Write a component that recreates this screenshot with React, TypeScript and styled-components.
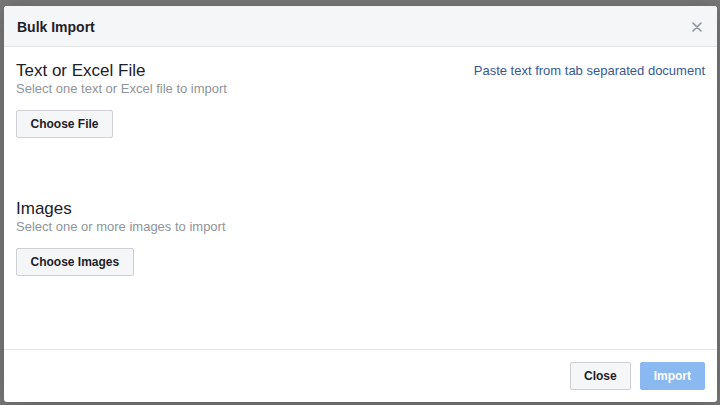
import styled, { createGlobalStyle } from "styled-components";

const GlobalStyle = createGlobalStyle`
    html, body {
        margin: 0;
        padding: 0;
        background: #7a7a7a;
    }
    * {
        box-sizing: border-box;
    }
`;

const Backdrop = styled.div`
    width: 720px;
    height: 405px;
    padding: 6px 3px 3px 4px;
    display: flex;
    background: #7a7a7a;
    font-family: "Liberation Sans", Arial, sans-serif;
`;

const Modal = styled.div`
    flex: 1;
    display: flex;
    flex-direction: column;
    background: #fff;
    border-radius: 3px;
    overflow: hidden;
    box-shadow: 0 2px 26px rgba(0, 0, 0, 0.25);
`;

const Header = styled.div`
    height: 41px;
    display: flex;
    align-items: center;
    justify-content: space-between;
    padding: 1px 12px 0 13px;
    background: #f5f6f7;
    border-bottom: 1px solid #e5e5e5;
`;

const HeaderTitle = styled.h1`
    margin: 0;
    font-size: 14px;
    font-weight: bold;
    color: #1d2129;
`;

const CloseX = styled.button`
    width: 16px;
    height: 16px;
    padding: 0;
    border: none;
    background: transparent;
    display: flex;
    align-items: center;
    justify-content: center;
    cursor: pointer;
`;

const Body = styled.div`
    flex: 1;
    padding: 14px 12px 12px 12px;
    display: flex;
    flex-direction: column;
    gap: 61px;
`;

const Section = styled.section`
    display: flex;
    flex-direction: column;
    align-items: flex-start;
`;

const SectionTop = styled.div`
    align-self: stretch;
    display: flex;
    justify-content: space-between;
    align-items: flex-start;
`;

const SectionTitle = styled.h2`
    margin: 0;
    font-size: 17px;
    line-height: 20px;
    font-weight: normal;
    color: #1d2129;
`;

const SectionHint = styled.div`
    font-size: 13px;
    line-height: 16px;
    color: #90949c;
`;

const TextLink = styled.a`
    margin-top: 2px;
    font-size: 13px;
    line-height: 16px;
    color: #365899;
    text-decoration: none;
    cursor: pointer;
`;

type ButtonProps = {
    $primary?: boolean;
    $pad?: number;
};

const Button = styled.button<ButtonProps>`
    height: 28px;
    padding: 0 ${p => p.$pad ?? 13}px;
    border-radius: 2px;
    font-family: inherit;
    font-size: 12px;
    font-weight: bold;
    cursor: pointer;
    border: 1px solid ${p => (p.$primary ? "#8ab9f2" : "#ced0d4")};
    background: ${p => (p.$primary ? "#8ab9f2" : "#f5f6f7")};
    color: ${p => (p.$primary ? "#ffffff" : "#1d2129")};
`;

const PickButton = styled(Button)`
    margin-top: 13px;
`;

const Footer = styled.div`
    display: flex;
    justify-content: flex-end;
    gap: 9px;
    padding: 12px;
    border-top: 1px solid #e5e5e5;
`;

const CrossIcon = () => (
    <svg width="10" height="10" viewBox="0 0 10 10">
        <path d="M1 1L9 9M9 1L1 9" stroke="#8d949e" strokeWidth="1.6" strokeLinecap="round" />
    </svg>
);

export default function App() {
    return (
        <>
            <GlobalStyle />
            <Backdrop>
                <Modal>
                    <Header>
                        <HeaderTitle>Bulk Import</HeaderTitle>
                        <CloseX aria-label="Close">
                            <CrossIcon />
                        </CloseX>
                    </Header>
                    <Body>
                        <Section>
                            <SectionTop>
                                <div>
                                    <SectionTitle>Text or Excel File</SectionTitle>
                                    <SectionHint>Select one text or Excel file to import</SectionHint>
                                </div>
                                <TextLink>Paste text from tab separated document</TextLink>
                            </SectionTop>
                            <PickButton $pad={13.5}>Choose File</PickButton>
                        </Section>
                        <Section>
                            <SectionTitle>Images</SectionTitle>
                            <SectionHint>Select one or more images to import</SectionHint>
                            <PickButton $pad={13.5}>Choose Images</PickButton>
                        </Section>
                    </Body>
                    <Footer>
                        <Button>Close</Button>
                        <Button $primary>Import</Button>
                    </Footer>
                </Modal>
            </Backdrop>
        </>
    );
}
